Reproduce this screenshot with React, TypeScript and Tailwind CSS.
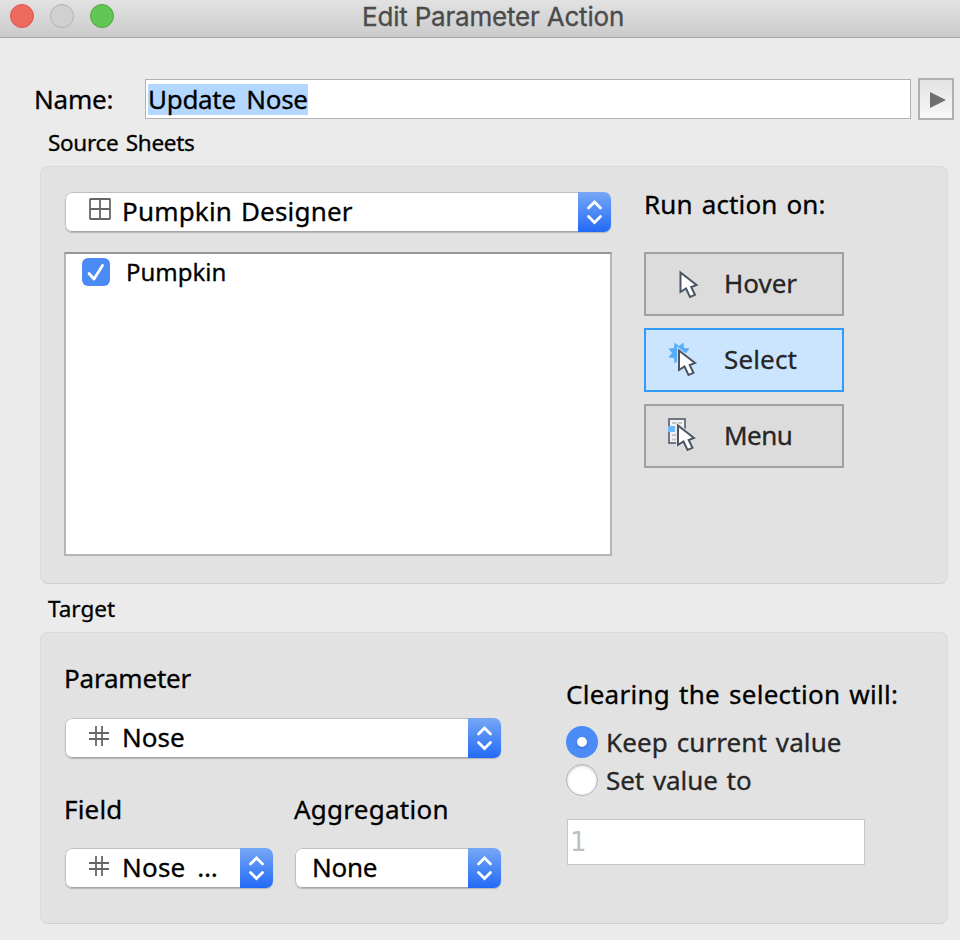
import { useState, type ReactNode } from "react";

type RunMode = "hover" | "select" | "menu";

export default function App() {
  const [runMode, setRunMode] = useState<RunMode>("select");
  const [clearing, setClearing] = useState<"keep" | "set">("keep");

  return (
    <main className="flex h-[940px] w-[960px] flex-col overflow-hidden bg-[#ebebeb] font-['Noto_Sans',sans-serif] text-[26px] leading-[32px] whitespace-nowrap text-black [-webkit-text-stroke:0.3px] [word-spacing:2px]">
      <TitleBar />

      <div className="mt-10 flex h-[42px] items-center pl-[34px]">
        <label className="w-[111px] tracking-[-0.2px]">Name:</label>
        <div className="flex h-10 w-[766px] items-center border border-[#b1b1b1] bg-white pl-[2px]">
          <span className="h-[31px] w-[160px] bg-[#b3d7ff] leading-[30px] tracking-[-0.3px] [word-spacing:4px]">Update Nose</span>
        </div>
        <button className="ml-[7px] flex h-[42px] w-9 items-center justify-center border-2 border-[#b0b0b0] bg-linear-to-b from-[#e3e3e3] to-[#f8f8f8]">
          <svg width="16" height="16" viewBox="0 0 16 16" className="mt-[2px] ml-[3px]">
            <path d="M0 0L16 8L0 16Z" fill="#6f6f6f" />
          </svg>
        </button>
      </div>

      <h2 className="mt-[7px] h-[39px] pl-12 text-[22.5px] leading-[31px] tracking-[-0.32px]">Source Sheets</h2>
      <section className="ml-10 flex h-[418px] w-[908px] rounded-lg border border-[#dadada] border-b-[#d0d0d0] bg-[#e2e2e2] pt-[25px] pl-[23px]">
        <div className="w-[548px]">
          <Combo className="ml-px w-[546px]">
            <SheetIcon />
            <span className="tracking-[0.18px]">Pumpkin Designer</span>
          </Combo>
          <div className="mt-5 h-[304px] border-2 border-[#b4b4b4] border-t-[#979797] bg-white pt-1 pl-4">
            <div className="flex h-7 items-center">
              <CheckBox />
              <span className="ml-4 text-[24px]">Pumpkin</span>
            </div>
          </div>
        </div>

        <div className="ml-8 w-[200px]">
          <div className="-mt-1 mb-8 tracking-[0.15px]">Run action on:</div>
          <div className="flex flex-col gap-3">
            <ModeButton active={runMode === "hover"} onClick={() => setRunMode("hover")}>
              <ModeIcon>
                <Pointer x={15.5} y={9} />
              </ModeIcon>
              <span>Hover</span>
            </ModeButton>
            <ModeButton active={runMode === "select"} onClick={() => setRunMode("select")}>
              <ModeIcon>
                <path
                  d="M19.4 5.4L20 11L25.6 11.6L22 16L15 23L10.6 26.6L10 21L4.4 20.4L8 16L4.4 11.6L10 11L10.6 5.4L15 9Z"
                  fill="#58acfa"
                />
                <Pointer x={14} y={11} halo="#cce5ff" />
              </ModeIcon>
              <span className="tracking-[0.15px]">Select</span>
            </ModeButton>
            <ModeButton active={runMode === "menu"} onClick={() => setRunMode("menu")}>
              <ModeIcon>
                <rect x="5" y="6" width="16" height="24" fill="#f2f2f2" stroke="#6d7785" strokeWidth="2" />
                <path d="M8 10H12M14 10H18M8 22H12M8 26.5H12" stroke="#c4c4c4" strokeWidth="2" />
                <Pointer x={13} y={10} halo="#e6e6e6" />
                <rect x="4" y="13" width="7" height="6" fill="#6db8fb" />
              </ModeIcon>
              <span className="tracking-[-0.5px]">Menu</span>
            </ModeButton>
          </div>
        </div>
      </section>

      <h2 className="mt-[9px] h-[39px] pl-12 text-[22.5px] leading-[31px]">Target</h2>
      <section className="ml-10 flex h-[292px] w-[908px] rounded-lg border border-[#dadada] border-b-[#d0d0d0] bg-[#e2e2e2] pl-[23px]">
        <div className="w-[502px] pt-[29px]">
          <div className="tracking-[-0.2px]">Parameter</div>
          <Combo className="mt-6 ml-px w-[436px]">
            <HashIcon />
            <span>Nose</span>
          </Combo>
          <div className="mt-[35px] flex">
            <div className="w-[230px]">
              <div className="tracking-[0.2px]">Field</div>
              <Combo className="mt-[23px] ml-px w-[208px]">
                <HashIcon />
                <span className="tracking-[0.2px] [word-spacing:5px]">Nose …</span>
              </Combo>
            </div>
            <div>
              <div className="tracking-[0.25px]">Aggregation</div>
              <Combo className="mt-[23px] ml-px w-[206px]">
                <span className="ml-4 tracking-[-0.3px]">None</span>
              </Combo>
            </div>
          </div>
        </div>

        <div className="pt-[45px]">
          <div className="tracking-[0.27px]">Clearing the selection will:</div>
          <div className="mt-4 flex flex-col gap-[6px]">
            <Radio checked={clearing === "keep"} onClick={() => setClearing("keep")}>
              <span className="tracking-[0.1px]">Keep current value</span>
            </Radio>
            <Radio checked={clearing === "set"} onClick={() => setClearing("set")}>
              <span className="tracking-[-0.05px]">Set value to</span>
            </Radio>
          </div>
          <div className="mt-[23px] ml-px flex h-[46px] w-[298px] items-center border border-[#c6c6c6] bg-white pl-[2px] font-['DejaVu_Sans',sans-serif] text-[#bfbfbf] [-webkit-text-stroke:0px]">
            1
          </div>
        </div>
      </section>
    </main>
  );
}

function TitleBar() {
  return (
    <header className="relative flex h-[38px] shrink-0 items-start gap-4 border-b border-[#a7a7a7] bg-linear-to-b from-[#e2e2e2] to-[#cbcbcb] pt-1 pl-[10px]">
      <span className="size-6 rounded-full border border-[#e0524a] bg-[#ed6a5f]" />
      <span className="size-6 rounded-full border border-[#b2b2b2] bg-[#d0d0d0]" />
      <span className="size-6 rounded-full border border-[#51a73e] bg-[#62c655]" />
      <h1 className="absolute top-0 left-[362px] font-[Inter,sans-serif] text-[26px] leading-[34px] tracking-[-0.2px] text-[#4b4b4b] [word-spacing:0px]">
        Edit Parameter Action
      </h1>
    </header>
  );
}

function Combo({ className, children }: { className: string; children: ReactNode }) {
  return (
    <div className={"flex h-10 overflow-hidden rounded-[7px] bg-white shadow-[0_1px_1px_#b5b5b5] " + className}>
      <div className="flex flex-1 items-center rounded-l-[7px] border border-r-0 border-[#bfbfbf] border-b-[#a6a6a6] pb-[2px]">
        {children}
      </div>
      <div className="flex w-[33px] items-center justify-center bg-linear-to-b from-[#76a6f5] to-[#2169f5]">
        <svg width="17" height="26" viewBox="0 0 17 26" fill="none" stroke="#fff" strokeWidth="2.8" strokeLinecap="round">
          <path d="M2.500 9L8.500 3L14.500 9M2.500 17.500L8.500 23.500L14.500 17.500" />
        </svg>
      </div>
    </div>
  );
}

function ModeButton({ active, onClick, children }: { active: boolean; onClick: () => void; children: ReactNode }) {
  return (
    <button
      onClick={onClick}
      className={
        "flex h-16 items-center gap-5 border-2 pb-[2px] pl-[18px] text-[#262626] " +
        (active ? "border-[#3399ff] bg-[#cce5ff]" : "border-[#a0a0a0] bg-[#dcdcdc]")
      }
    >
      {children}
    </button>
  );
}

function ModeIcon({ children }: { children: ReactNode }) {
  return (
    <svg width="40" height="44" viewBox="0 0 40 44" fill="none">
      {children}
    </svg>
  );
}

// arrow cursor, x/y is the tip
function Pointer({ x, y, halo }: { x: number; y: number; halo?: string }) {
  const d = "M1 2.500V22L6.500 18.500L10.500 27L15.500 24.800L11.700 17L17 15Z";
  return (
    <g transform={"translate(" + x + " " + y + ")"}>
      {halo && <path d={d} stroke={halo} strokeWidth="4" />}
      <path d={d} fill="#fff" stroke="#4b5563" strokeWidth="2" />
    </g>
  );
}

function SheetIcon() {
  return (
    <svg width="22" height="22" viewBox="0 0 22 22" fill="none" stroke="#666" className="mr-[11px] mb-1 ml-[23px]">
      <rect x="1" y="1" width="20" height="20" rx="0.5" strokeWidth="1.800" />
      <path d="M11 1V21M1 11H21" strokeWidth="1.800" />
    </svg>
  );
}

function HashIcon() {
  return (
    <svg width="20" height="20" viewBox="0 0 20 20" fill="none" stroke="#666" strokeWidth="1.800" className="mr-[13px] mb-0.5 ml-[23px]">
      <path d="M7 0V20M13 0V20M0 7H20M0 13H20" />
    </svg>
  );
}

function CheckBox() {
  return (
    <span className="flex size-7 items-center justify-center rounded-[6px] bg-[#4b8bf5]">
      <svg width="28" height="28" viewBox="0 0 28 28" fill="none">
        <path d="M7 15.500L12 21L20.500 7.500" stroke="#fff" strokeWidth="2.800" strokeLinecap="round" strokeLinejoin="round" />
      </svg>
    </span>
  );
}

function Radio({ checked, onClick, children }: { checked: boolean; onClick: () => void; children: ReactNode }) {
  return (
    <button onClick={onClick} className="flex h-8 items-center gap-2 text-[#262626] [word-spacing:2px]">
      {checked ? (
        <span className="flex size-8 items-center justify-center rounded-full bg-[#4b8bf5]">
          <span className="size-[10px] rounded-full bg-white shadow-[0_1px_2px_#2b62c0]" />
        </span>
      ) : (
        <span className="size-8 rounded-full border border-[#b4b4b4] bg-white shadow-[inset_0_1px_3px_#c9c9c9]" />
      )}
      {children}
    </button>
  );
}
